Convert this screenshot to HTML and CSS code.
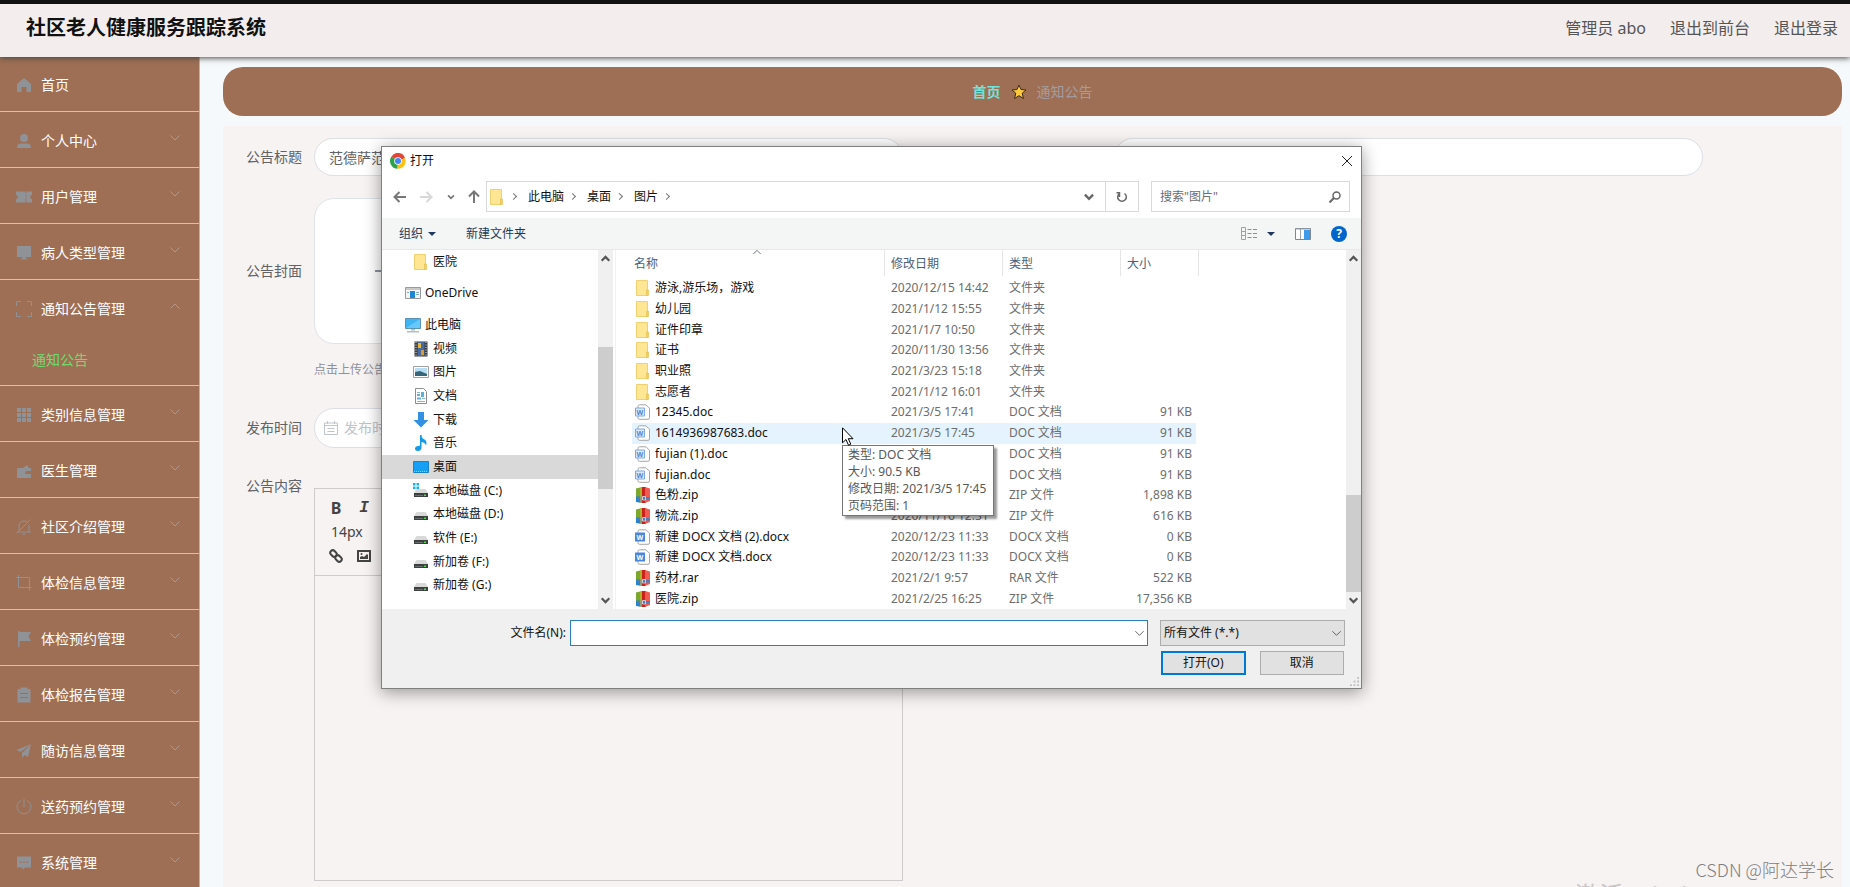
FILE: index.html
```
<!DOCTYPE html>
<html lang="zh-CN">
<head>
  <meta charset="UTF-8">
  <meta name="viewport" content="width=device-width, initial-scale=1.0">
  <title>社区老人健康服务跟踪系统</title>
  <link rel="stylesheet" href="styles.css">
</head>
<body>
  <!-- shared icons -->
  <svg class="sprite" aria-hidden="true">
    <symbol id="chevron" viewBox="0 0 12 12"><path d="M1.500 3.500l4.500 4.500l4.500-4.500" fill="none" stroke="currentColor"/></symbol>
    <symbol id="arrow-down" viewBox="0 0 12 12"><path d="M2.500 4l3.500 3.500l3.500-3.500" fill="none" stroke="currentColor" stroke-width="2"/></symbol>
    <symbol id="folder" viewBox="0 0 16 16"><path d="M1.500 .5h11v15h-11z" fill="#ffe694" stroke="#f0d070"/><path d="M11.500 10h2v5.500h-2z" fill="#f5cf5c" stroke="#e5be4f" stroke-width=".6"/></symbol>
    <symbol id="drive" viewBox="0 0 16 16"><path d="M3.500 6h9l2.500 4h-14z" fill="#d9d9d9"/><path d="M1 10h14v4h-14z" fill="#3b3f3f"/><path d="M2 12h8v1h-8z" fill="#6b7070"/><path d="M11 11.500h2v1.500h-2z" fill="#4be04b"/></symbol>
    <symbol id="doc" viewBox="0 0 16 16"><path d="M4.500 .8h6.500l3.500 3.500v9.500q0 1.500-1.500 1.500h-8.500q-1.500 0-1.500-1.500v-11.500q0-1.500 1.500-1.500z" fill="#fff" stroke="#a5a5a5"/><path d="M.5 4h9v8h-9z" fill="#dbe9fb" stroke="#7ea8de"/><text x="5" y="10.600" font-size="7" font-weight="bold" text-anchor="middle" fill="#4d86cf">W</text></symbol>
    <symbol id="docx" viewBox="0 0 16 16"><path d="M4.500 .8h6.500l3.500 3.500v9.500q0 1.500-1.500 1.500h-8.500q-1.500 0-1.500-1.500v-11.500q0-1.500 1.500-1.500z" fill="#fff" stroke="#a5a5a5"/><path d="M0 3.500h10v9h-10z" fill="#4a86e0"/><text x="5" y="10.600" font-size="7" font-weight="bold" text-anchor="middle" fill="#fff">W</text></symbol>
    <symbol id="archive" viewBox="0 0 16 16"><path d="M1 1.500l6-1.500v10h-6z" fill="#79a82c"/><path d="M7 0h4v16h-4z" fill="#c9221b"/><path d="M10 0l5 1.500v12.500l-5 2z" fill="#f15a50"/><path d="M1 9.500h6v6.500l-6-1z" fill="#2880d0"/><path d="M2 10h13v2.500h-13z" fill="#4b7ebb"/><path d="M7.500 9.500h3v3.500h-3z" fill="none" stroke="#c3cedb"/><path d="M5.500 0h1v16h-1z" fill="#e8b62e"/></symbol>
  </svg>

  <header class="header">
    <h1 class="title">社区老人健康服务跟踪系统</h1>
    <nav class="user-nav">
      <span>管理员 abo</span>
      <a href="#">退出到前台</a>
      <a href="#">退出登录</a>
    </nav>
  </header>

  <div class="layout">
    <aside class="sidebar">
      <ul class="menu">
        <li><a href="#"><svg class="menu-icon" viewBox="0 0 16 16"><path d="M8 1l7 6v8h-4.500v-5h-5v5h-4.500v-8z"/></svg>首页</a></li>
        <li><a href="#"><svg class="menu-icon" viewBox="0 0 16 16"><circle cx="8" cy="5" r="4"/><path d="M1 15v-1q0-3.500 4-3.500h6q4 0 4 3.500v1z"/></svg>个人中心<svg class="menu-arrow"><use href="#chevron"/></svg></a></li>
        <li><a href="#"><svg class="menu-icon" viewBox="0 0 16 16"><path d="M0 2.500h9.500v2h1v-2h5.500v3.500q-2 .3-2 2t2 2v3.500h-5.500v-2h-1v2h-9.500v-3.500q2-.3 2-2t-2-2zM9.500 6h1v1.500h-1zM9.500 9h1v1.500h-1z" fill-rule="evenodd"/></svg>用户管理<svg class="menu-arrow"><use href="#chevron"/></svg></a></li>
        <li><a href="#"><svg class="menu-icon" viewBox="0 0 16 16"><path d="M1 1h14v11h-14zM6.500 12h3v1.500h2v1h-7v-1h2z"/></svg>病人类型管理<svg class="menu-arrow"><use href="#chevron"/></svg></a></li>
        <li class="open">
          <a href="#"><svg class="menu-icon line" viewBox="0 0 16 16"><path d="M.5 5v-4.500h4.500M11 .5h4.500v4.500M15.500 11v4.500h-4.500M5 15.500h-4.500v-4.500"/></svg>通知公告管理<svg class="menu-arrow"><use href="#chevron"/></svg></a>
          <a href="#" class="submenu">通知公告</a>
        </li>
        <li><a href="#"><svg class="menu-icon" viewBox="0 0 16 16"><path d="M1 1h4v4h-4zM6 1h4v4h-4zM11 1h4v4h-4zM1 6h4v4h-4zM6 6h4v4h-4zM11 6h4v4h-4zM1 11h4v4h-4zM6 11h4v4h-4zM11 11h4v4h-4z"/></svg>类别信息管理<svg class="menu-arrow"><use href="#chevron"/></svg></a></li>
        <li><a href="#"><svg class="menu-icon" viewBox="0 0 16 16"><path d="M1 5h6l4-3l2 3h2v3h-4q-2 0-2 1.500t2 1.500h4v4h-14z"/></svg>医生管理<svg class="menu-arrow"><use href="#chevron"/></svg></a></li>
        <li><a href="#"><svg class="menu-icon line" viewBox="0 0 16 16"><path d="M14.500 .5l-14 14M1 13h14M3 11.500v-4.500q0-5 5-5q2 0 3.500 1M13 5.500v7.500M6.500 15h3"/></svg>社区介绍管理<svg class="menu-arrow"><use href="#chevron"/></svg></a></li>
        <li><a href="#"><svg class="menu-icon line" viewBox="0 0 16 16"><path d="M0 2.500h13.500v13M2.500 0v12.500h13"/></svg>体检信息管理<svg class="menu-arrow"><use href="#chevron"/></svg></a></li>
        <li><a href="#"><svg class="menu-icon" viewBox="0 0 16 16"><path d="M2 0h1.500v1h11.500l-2.500 4.500l2.500 4.500h-11.500v6h-1.500z"/></svg>体检预约管理<svg class="menu-arrow"><use href="#chevron"/></svg></a></li>
        <li><a href="#"><svg class="menu-icon" viewBox="0 0 16 16"><path d="M1.500 2h3v-1.500h7v1.500h3v13.500h-13zM4 6v1h8v-1zM4 10v1h8v-1z" fill-rule="evenodd"/></svg>体检报告管理<svg class="menu-arrow"><use href="#chevron"/></svg></a></li>
        <li><a href="#"><svg class="menu-icon" viewBox="0 0 16 16"><path d="M15 1l-14.500 6l4 2zM15 1l-9 9v5l2.500-3l3.500 2z"/></svg>随访信息管理<svg class="menu-arrow"><use href="#chevron"/></svg></a></li>
        <li><a href="#"><svg class="menu-icon line" viewBox="0 0 16 16"><path d="M8 0v8M5 1.500a7 7 0 1 0 6 0"/></svg>送药预约管理<svg class="menu-arrow"><use href="#chevron"/></svg></a></li>
        <li><a href="#"><svg class="menu-icon" viewBox="0 0 16 16"><path d="M1 1.500h14v11h-6l-2.500 2.500v-2.500h-5.500zM4 6.500v1.500h1.500v-1.500zM7.300 6.500v1.500h1.500v-1.500zM10.600 6.500v1.500h1.500v-1.500z" fill-rule="evenodd"/></svg>系统管理<svg class="menu-arrow"><use href="#chevron"/></svg></a></li>
      </ul>
    </aside>

    <main class="main">
      <nav class="breadcrumb">
        <a href="#">首页</a>
        <svg class="star" viewBox="0 0 16 16"><path d="M8 1l2 4.500l5 .5l-3.800 3.200l1.300 5.300l-4.500-2.800l-4.500 2.800l1.300-5.300l-3.800-3.200l5-.5z" fill="#ffc93c" stroke="#3b2a18" stroke-linejoin="round"/></svg>
        <span>通知公告</span>
      </nav>

      <form class="form">
        <div class="form-row">
          <div class="form-item">
            <label for="notice-title">公告标题</label>
            <input class="text-input" type="text" id="notice-title" value="范德萨范德萨">
          </div>
          <div class="form-item no-label">
            <input class="text-input" type="text" aria-label="公告类型">
          </div>
        </div>
        <div class="form-item upload-item">
          <label for="cover">公告封面</label>
          <button type="button" class="upload" id="cover" aria-label="上传公告封面">
            <svg width="28" height="28" viewBox="0 0 28 28"><path d="M1 14h26M14 1v26" stroke="#8c939d" stroke-width="2"/></svg>
          </button>
        </div>
        <p class="tip">点击上传公告封面</p>
        <div class="form-item">
          <label for="publish-date">发布时间</label>
          <div class="date-box">
            <svg width="14" height="14" viewBox="0 0 14 14"><path d="M.5 2h13v11.500h-13zM.5 4.500h13M3.500 7.500h7M3.500 10.500h7M3.500 0v3M10.500 0v3" fill="none" stroke="#c0c4cc"/></svg>
            <input type="text" id="publish-date" placeholder="发布时间">
          </div>
        </div>
        <div class="form-row content-row">
          <div class="form-item content-item">
            <label for="content">公告内容</label>
            <div class="editor">
              <div class="editor-bar">
                <button type="button" class="bold">B</button>
                <button type="button" class="italic">I</button>
                <span class="font-size">14px</span>
                <button type="button" aria-label="链接"><svg width="14" height="14" viewBox="0 0 14 14"><g fill="none" stroke="#444" stroke-width="2"><rect x="-3.500" y="-2.500" width="7" height="5" rx="2.500" transform="translate(4.500 4.500) rotate(45)"/><rect x="-3.500" y="-2.500" width="7" height="5" rx="2.500" transform="translate(9.500 9.500) rotate(45)"/></g></svg></button>
                <button type="button" aria-label="图片"><svg width="14" height="12" viewBox="0 0 14 12"><path d="M1 1h12v10h-12z" fill="none" stroke="#444" stroke-width="2"/><circle cx="4.500" cy="4" r="1" fill="#444"/><path d="M3 9v-2l2-1l2 1l3-3l1 1v4z" fill="#444"/></svg></button>
              </div>
              <textarea id="content"></textarea>
            </div>
          </div>
        </div>
      </form>
    </main>
  </div>

  <section class="dialog" role="dialog" aria-label="打开">
    <div class="dialog-title">
      <svg width="16" height="16" viewBox="0 0 16 16"><path d="M8 8L1.500 3.500A7.500 7.500 0 0 1 15 5z" fill="#e2453a"/><path d="M8 8L1.500 3.500A7.700 7.700 0 0 0 7.500 15.700z" fill="#2ba24c"/><path d="M8 8L15 5A7.600 7.600 0 0 1 7.500 15.700z" fill="#fbc116"/><circle cx="8" cy="8" r="3.800" fill="#fff"/><circle cx="8" cy="8" r="3" fill="#4285f4"/></svg>
      <span>打开</span>
      <button type="button" class="close" aria-label="关闭"><svg width="12" height="12" viewBox="0 0 12 12"><path d="M1 1l10 10M11 1l-10 10" stroke="#222"/></svg></button>
    </div>

    <div class="nav-row">
      <div class="nav-buttons">
        <button type="button" aria-label="后退"><svg width="14" height="12" viewBox="0 0 14 12"><path d="M13 6h-11M6.500 1l-5 5l5 5" fill="none" stroke="#777" stroke-width="2"/></svg></button>
        <button type="button" aria-label="前进"><svg width="14" height="12" viewBox="0 0 14 12"><path d="M1 6h11M7.500 1l5 5l-5 5" fill="none" stroke="#d8d8d8" stroke-width="2"/></svg></button>
        <button type="button" aria-label="最近位置"><svg width="10" height="10" viewBox="0 0 12 12"><use href="#arrow-down"/></svg></button>
        <button type="button" aria-label="上移"><svg width="12" height="13" viewBox="0 0 12 13"><path d="M6 13v-11M1 6.500l5-5l5 5" fill="none" stroke="#777" stroke-width="2"/></svg></button>
      </div>
      <div class="address">
        <svg width="16" height="16"><use href="#folder"/></svg>
        <i class="sep"></i><a href="#">此电脑</a><i class="sep"></i><a href="#">桌面</a><i class="sep"></i><a href="#">图片</a><i class="sep"></i>
        <button type="button" class="history" aria-label="历史"><svg width="14" height="14" viewBox="0 0 12 12"><use href="#arrow-down"/></svg></button>
        <button type="button" class="refresh" aria-label="刷新"><svg width="12" height="12" viewBox="0 0 12 12"><path d="M8.500 2.500a4.300 4.300 0 1 1-5 0M3.500 6v-4.200h-3" fill="none" stroke="#666" stroke-width="1.500"/></svg></button>
      </div>
      <div class="search">
        <input type="text" placeholder='搜索"图片"' aria-label="搜索">
        <svg width="12" height="12" viewBox="0 0 12 12"><circle cx="7.500" cy="4.500" r="3.500" fill="none" stroke="#666" stroke-width="1.500"/><path d="M5 7l-4.500 4.500" stroke="#666" stroke-width="2"/></svg>
      </div>
    </div>

    <div class="tool-row">
      <button type="button" class="organize">组织<i class="triangle"></i></button>
      <button type="button">新建文件夹</button>
      <div class="view-tools">
        <button type="button" aria-label="更改视图"><svg width="17" height="13" viewBox="0 0 17 13"><path d="M.5 .5h4v12h-4zM.5 4.500h4M.5 8.500h4" fill="none" stroke="#a0a0a0"/><path d="M6.500 2.500h4M12 2.500h4M6.500 6.500h4M12 6.500h4M6.500 10.500h4M12 10.500h4" stroke="#8f8f8f"/></svg><i class="triangle"></i></button>
        <button type="button" aria-label="预览窗格"><svg width="16" height="12" viewBox="0 0 16 12"><path d="M.5 .5h15v11h-15z" fill="#fff" stroke="#7e8790"/><path d="M.5 1h15M5.500 1v10" stroke="#9aa2aa"/><path d="M9 2h6v9h-6z" fill="#3d9be9"/></svg></button>
        <button type="button" class="help">?</button>
      </div>
    </div>

    <div class="dialog-body">
      <ul class="tree">
        <li class="child"><svg class="file-icon"><use href="#folder"/></svg>医院</li>
        <li class="root"><svg class="file-icon" viewBox="0 0 16 16"><path d="M.5 2.500h15v11h-15z" fill="#f4f4f4" stroke="#999"/><path d="M1 3h14v2h-14z" fill="#c9c9c9"/><path d="M5 6h5v7h-5z" fill="#1c86d8"/><path d="M11 7.500h3M11 9.500h3M2 7.500h2" stroke="#8aa7be"/></svg>OneDrive</li>
        <li class="root"><svg class="file-icon" viewBox="0 0 16 16"><path d="M.5 1.500h15v10h-15z" fill="#3fb4f2" stroke="#5b93b5"/><path d="M1 11l14-9v9z" fill="#66c8fa"/><path d="M6 12h4v1.500h-4zM2 14h12v1.500h-12z" fill="#b2bfca"/></svg>此电脑</li>
        <li class="child"><svg class="file-icon" viewBox="0 0 16 16"><path d="M1.500 .5h13v15h-13z" fill="#37393d"/><path d="M4.500 1h7v14h-7z" fill="#486a9f"/><path d="M5 2h3v5h-3z" fill="#e7b83c"/><path d="M8 9h3v5h-3z" fill="#d99c35"/><path d="M3 1v14M13 1v14" stroke="#eee" stroke-dasharray="1 1.500"/></svg>视频</li>
        <li class="child"><svg class="file-icon" viewBox="0 0 16 16"><path d="M.5 2.500h15v11h-15z" fill="#fff" stroke="#a0a0a0"/><path d="M2 4h12v8h-12z" fill="#b7def5"/><path d="M2 8l5-1l7 3v2h-12z" fill="#37667a"/></svg>图片</li>
        <li class="child"><svg class="file-icon" viewBox="0 0 16 16"><path d="M2.500 .5h8l3 3v12h-11z" fill="#fff" stroke="#8d8d8d"/><path d="M4 6h3v2h-3zM8 4h3v5h-3zM4 9.500h4v2h-4z" fill="#5eb0d8"/><path d="M4 4.500h3M9 10.500h3M4 13.500h8" stroke="#8bb7cb"/></svg>文档</li>
        <li class="child"><svg class="file-icon" viewBox="0 0 16 16"><path d="M5 0h6v8h4.500l-7.500 7.500l-7.500-7.500h4.500z" fill="#3490e3"/></svg>下载</li>
        <li class="child"><svg class="file-icon" viewBox="0 0 16 16"><path d="M7 0h1.500q0 3 3 4.500t1.500 6q-.5-3-4.500-3.500v6q-.5 3-3.500 3t-3-2.500t5-3z" fill="#149be8"/></svg>音乐</li>
        <li class="child selected"><svg class="file-icon" viewBox="0 0 16 16"><path d="M.5 2.500h15v11h-15z" fill="#169ff5" stroke="#1a82c6"/><path d="M1 12.500h14" stroke="#8dd0f8" stroke-dasharray="1 1"/></svg>桌面</li>
        <li class="child"><svg class="file-icon" viewBox="0 0 16 16"><use href="#drive" width="16" height="16"/><path d="M0 0h2.500v2.500h-2.500zM3.500 0h2.500v2.500h-2.500zM0 3.500h2.500v2.500h-2.500zM3.500 3.500h2.500v2.500h-2.500z" fill="#18b2ea"/></svg>本地磁盘 (C:)</li>
        <li class="child"><svg class="file-icon"><use href="#drive"/></svg>本地磁盘 (D:)</li>
        <li class="child"><svg class="file-icon"><use href="#drive"/></svg>软件 (E:)</li>
        <li class="child"><svg class="file-icon"><use href="#drive"/></svg>新加卷 (F:)</li>
        <li class="child"><svg class="file-icon"><use href="#drive"/></svg>新加卷 (G:)</li>
      </ul>
      <div class="scrollbar">
        <svg class="flip" viewBox="0 0 12 12"><use href="#arrow-down"/></svg>
        <div class="track tree-track"><div class="thumb"></div></div>
        <svg viewBox="0 0 12 12"><use href="#arrow-down"/></svg>
      </div>

      <table class="files">
        <thead>
          <tr><th>名称<svg class="sort" viewBox="0 0 12 12"><use href="#chevron"/></svg></th><th>修改日期</th><th>类型</th><th>大小</th></tr>
        </thead>
        <tbody>
          <tr><td><svg class="file-icon"><use href="#folder"/></svg>游泳,游乐场，游戏</td><td>2020/12/15 14:42</td><td>文件夹</td><td></td></tr>
          <tr><td><svg class="file-icon"><use href="#folder"/></svg>幼儿园</td><td>2021/1/12 15:55</td><td>文件夹</td><td></td></tr>
          <tr><td><svg class="file-icon"><use href="#folder"/></svg>证件印章</td><td>2021/1/7 10:50</td><td>文件夹</td><td></td></tr>
          <tr><td><svg class="file-icon"><use href="#folder"/></svg>证书</td><td>2020/11/30 13:56</td><td>文件夹</td><td></td></tr>
          <tr><td><svg class="file-icon"><use href="#folder"/></svg>职业照</td><td>2021/3/23 15:18</td><td>文件夹</td><td></td></tr>
          <tr><td><svg class="file-icon"><use href="#folder"/></svg>志愿者</td><td>2021/1/12 16:01</td><td>文件夹</td><td></td></tr>
          <tr><td><svg class="file-icon"><use href="#doc"/></svg>12345.doc</td><td>2021/3/5 17:41</td><td>DOC 文档</td><td>91 KB</td></tr>
          <tr class="hover"><td><svg class="file-icon"><use href="#doc"/></svg>1614936987683.doc</td><td>2021/3/5 17:45</td><td>DOC 文档</td><td>91 KB</td></tr>
          <tr><td><svg class="file-icon"><use href="#doc"/></svg>fujian (1).doc</td><td></td><td>DOC 文档</td><td>91 KB</td></tr>
          <tr><td><svg class="file-icon"><use href="#doc"/></svg>fujian.doc</td><td></td><td>DOC 文档</td><td>91 KB</td></tr>
          <tr><td><svg class="file-icon"><use href="#archive"/></svg>色粉.zip</td><td></td><td>ZIP 文件</td><td>1,898 KB</td></tr>
          <tr><td><svg class="file-icon"><use href="#archive"/></svg>物流.zip</td><td>2020/11/16 12:31</td><td>ZIP 文件</td><td>616 KB</td></tr>
          <tr><td><svg class="file-icon"><use href="#docx"/></svg>新建 DOCX 文档 (2).docx</td><td>2020/12/23 11:33</td><td>DOCX 文档</td><td>0 KB</td></tr>
          <tr><td><svg class="file-icon"><use href="#docx"/></svg>新建 DOCX 文档.docx</td><td>2020/12/23 11:33</td><td>DOCX 文档</td><td>0 KB</td></tr>
          <tr><td><svg class="file-icon"><use href="#archive"/></svg>药材.rar</td><td>2021/2/1 9:57</td><td>RAR 文件</td><td>522 KB</td></tr>
          <tr><td><svg class="file-icon"><use href="#archive"/></svg>医院.zip</td><td>2021/2/25 16:25</td><td>ZIP 文件</td><td>17,356 KB</td></tr>
        </tbody>
      </table>
      <div class="scrollbar">
        <svg class="flip" viewBox="0 0 12 12"><use href="#arrow-down"/></svg>
        <div class="track file-track"><div class="thumb"></div></div>
        <svg viewBox="0 0 12 12"><use href="#arrow-down"/></svg>
      </div>
    </div>

    <div class="dialog-footer">
      <label for="filename">文件名(N):</label>
      <div class="combo">
        <input type="text" id="filename">
        <svg class="combo-arrow" viewBox="0 0 12 12"><use href="#chevron"/></svg>
      </div>
      <div class="filter">
        <select aria-label="文件类型"><option>所有文件 (*.*)</option></select>
        <svg class="combo-arrow" viewBox="0 0 12 12"><use href="#chevron"/></svg>
      </div>
      <div class="actions">
        <button type="button" class="primary">打开(O)</button>
        <button type="button">取消</button>
      </div>
    </div>
    <svg class="grip" viewBox="0 0 10 10"><path d="M8 0h2v2h-2zM4 4h2v2h-2zM8 4h2v2h-2zM0 8h2v2h-2zM4 8h2v2h-2zM8 8h2v2h-2z" fill="#bfbfbf"/></svg>

    <div class="tooltip" role="tooltip">
      <div>类型: DOC 文档</div>
      <div>大小: 90.5 KB</div>
      <div>修改日期: 2021/3/5 17:45</div>
      <div>页码范围: 1</div>
    </div>
    <svg class="cursor" viewBox="0 0 12 19"><path d="M.5 .8v15l3.500-3.300l2.500 5.700l2.300-1l-2.500-5.500h4.700z" fill="#fff" stroke="#000"/></svg>
  </section>

  <div class="activate">激活 Windows</div>
  <div class="watermark">CSDN @阿达学长</div>
</body>
</html>
```
FILE: styles.css
```
* {
  box-sizing: border-box;
}
body {
  margin: 0;
  height: 100vh;
  overflow: hidden;
  display: flex;
  flex-direction: column;
  position: relative;
  border-top: 4px solid #111;
  background-color: #f6f9fc;
  font-family: "Noto Sans", "Noto Sans CJK SC", sans-serif;
  font-size: 14px;
  line-height: 20px;
  color: #606266;
}
a {
  color: inherit;
  text-decoration: none;
}
ul {
  list-style: none;
  margin: 0;
  padding: 0;
}
button, input, select, textarea {
  font: inherit;
  color: inherit;
}
button {
  padding: 0;
  border: 0;
  background: none;
}
input {
  outline: none;
  min-width: 0;
}
svg {
  flex: none;
}
.sprite {
  position: absolute;
  width: 0;
  height: 0;
}

/* header */
.header {
  display: flex;
  flex: none;
  justify-content: space-between;
  align-items: center;
  height: 53px;
  padding: 0 12px 5px 26px;
  background-color: #f3eeed;
  box-shadow: 0 1px 6px #444;
  z-index: 1;
}
.title {
  margin: 0;
  font-size: 20px;
  font-weight: bold;
  line-height: 28px;
  color: #111;
}
.user-nav {
  display: flex;
  gap: 24px;
  font-size: 16px;
  color: #555;
}

/* sidebar */
.layout {
  display: flex;
  flex: 1;
  min-height: 0;
}
.sidebar {
  width: 200px;
  flex: none;
  margin-top: -1px;
  background-color: #9e6f54;
  border-right: 1px solid #c9afa1;
}
.menu li {
  border-bottom: 1px solid #d3c0b6;
}
.menu a {
  display: flex;
  align-items: center;
  height: 55px;
  padding: 2px 18px 0 16px;
  color: #fff;
}
.menu-icon {
  width: 16px;
  height: 16px;
  margin-right: 9px;
  fill: #8f9297;
}
.menu-icon.line {
  fill: none;
  stroke: #8f9297;
}
.menu-arrow {
  width: 12px;
  height: 12px;
  margin: 0 0 6px auto;
  color: #b3978a;
}
.open .menu-arrow {
  transform: rotate(180deg);
}
.menu .submenu {
  height: 50px;
  padding: 0 0 0 32px;
  color: #6fdc6f;
}

/* main */
.main {
  display: flex;
  flex-direction: column;
  flex: 1;
  gap: 10px;
  padding: 10px 8px 0 23px;
}
.breadcrumb {
  display: flex;
  flex: none;
  justify-content: center;
  align-items: center;
  gap: 10px;
  height: 49px;
  border-radius: 20px;
  background-color: #9e6f54;
  color: #a39da0;
}
.breadcrumb a {
  font-weight: bold;
  color: #6ee5dc;
}
.star {
  width: 16px;
  height: 16px;
}
.form {
  flex: 1;
  padding: 12px 8px 0 11px;
  background-color: #f7f3f2;
}
.form-row {
  display: grid;
  grid-template-columns: 1fr 1fr;
}
.form-row .form-item {
  padding-right: 131px;
}
.form-item {
  display: flex;
  align-items: center;
}
.form-item label {
  width: 80px;
  flex: none;
  padding-right: 12px;
  text-align: right;
}
.form-row .no-label {
  padding-left: 80px;
}
.text-input {
  flex: 1;
  height: 38px;
  padding: 0 14px;
  border: 1px solid #dcdfe6;
  border-radius: 20px;
  background-color: #fff;
}
.upload-item {
  margin-top: 22px;
}
.upload {
  display: flex;
  align-items: center;
  justify-content: center;
  width: 148px;
  height: 146px;
  border: 1px solid #dfe3ea;
  border-radius: 20px;
  background-color: #fff;
}
.tip {
  margin: 16px 0 28px 80px;
  font-size: 12px;
  color: #8c919c;
}
.date-box {
  display: flex;
  align-items: center;
  gap: 6px;
  width: 220px;
  height: 40px;
  padding: 0 9px;
  border: 1px solid #dcdfe6;
  border-radius: 20px;
  background-color: #fff;
}
.date-box input {
  width: 150px;
  border: 0;
  padding: 0;
}
.date-box input::placeholder {
  color: #c0c4cc;
}
.content-row {
  margin-top: 28px;
}
.content-item {
  align-items: flex-start;
}
.editor {
  flex: 1;
  margin-top: 12px;
  border: 1px solid #ccc;
}
.editor-bar {
  display: grid;
  grid-template-columns: 28px 28px;
  grid-auto-rows: 24px;
  align-items: center;
  justify-items: center;
  padding: 7px;
  border-bottom: 1px solid #ccc;
  color: #444;
}
.editor-bar button {
  display: flex;
}
.bold, .italic {
  font-size: 16px;
  font-weight: bold;
}
.editor-bar .italic {
  font-family: "Liberation Mono", monospace;
  font-style: italic;
}
.font-size {
  grid-column: 1 / 3;
  justify-self: start;
  margin-left: 9px;
}
.editor textarea {
  display: block;
  width: 100%;
  height: 304px;
  border: 0;
  outline: none;
  resize: none;
  background: none;
}

/* file dialog */
.dialog {
  position: absolute;
  left: 381px;
  top: 142px;
  z-index: 2;
  width: 981px;
  border: 1px solid #808080;
  background-color: #fff;
  box-shadow: 0 3px 16px rgba(0, 0, 0, 0.4);
  font-size: 12px;
  line-height: 16px;
  color: #111;
}
.dialog button {
  display: flex;
  align-items: center;
}
.dialog-title {
  display: flex;
  align-items: center;
  gap: 4px;
  height: 27px;
  padding: 0 8px;
}
.close {
  margin-left: auto;
}
.nav-row {
  display: flex;
  gap: 12px;
  padding: 7px 11px 6px;
}
.nav-buttons {
  display: flex;
  align-items: center;
  justify-content: space-between;
  width: 87px;
  margin-right: -6px;
  color: #777;
}
.address {
  display: flex;
  align-items: center;
  flex: 1;
  height: 31px;
  padding-left: 2px;
  border: 1px solid #d9d9d9;
}
.sep {
  width: 5px;
  height: 5px;
  margin: 0 12px 0 6px;
  border: solid #777;
  border-width: 1px 1px 0 0;
  transform: rotate(45deg);
}
.history {
  margin: 0 9px 0 auto;
  color: #666;
}
.dialog .refresh {
  width: 33px;
  height: 29px;
  justify-content: center;
  border-left: 1px solid #d9d9d9;
}
.search {
  display: flex;
  align-items: center;
  width: 199px;
  padding: 0 8px;
  border: 1px solid #d9d9d9;
}
.search input {
  flex: 1;
  border: 0;
  padding: 0;
}
.search input::placeholder {
  color: #6d6d6d;
}
.tool-row {
  display: flex;
  align-items: center;
  gap: 30px;
  height: 32px;
  padding: 0 14px 0 17px;
  border-bottom: 1px solid #e6e8e9;
  background-color: #f4f6f6;
  color: #1e395b;
}
.triangle {
  margin-left: 5px;
  border: solid transparent;
  border-width: 4px 4px 0;
  border-top-color: #1e395b;
}
.view-tools {
  display: flex;
  align-items: center;
  gap: 20px;
  margin-left: auto;
}
.view-tools .triangle {
  margin-left: 9px;
}
.dialog .help {
  justify-content: center;
  width: 16px;
  height: 16px;
  border-radius: 50%;
  background-color: #0066cc;
  color: #fff;
  font-weight: bold;
}
.dialog-body {
  display: flex;
  height: 359px;
}
.tree {
  display: flex;
  flex-direction: column;
  width: 216px;
  padding-bottom: 12px;
}
.tree li {
  display: flex;
  align-items: center;
  flex: 1;
}
.tree .root {
  margin-top: 8px;
  padding-left: 23px;
}
.tree .child {
  padding-left: 31px;
}
.tree .selected {
  background-color: #d9d9d9;
}
.file-icon {
  width: 16px;
  height: 16px;
  margin-right: 4px;
}
.scrollbar {
  display: flex;
  flex-direction: column;
  align-items: center;
  width: 15px;
  padding: 2px 0;
  background-color: #f0f0f0;
  color: #555;
}
.scrollbar svg {
  width: 13px;
  height: 13px;
}
.flip {
  transform: rotate(180deg);
}
.track {
  display: flex;
  flex: 1;
  align-self: stretch;
}
.thumb {
  width: 100%;
  background-color: #cdcdcd;
}
.tree-track {
  align-items: flex-start;
  padding-top: 82px;
}
.tree-track .thumb {
  height: 142px;
}
.file-track {
  align-items: flex-end;
  padding-bottom: 2px;
}
.file-track .thumb {
  height: 97px;
}
.files {
  display: flex;
  flex-direction: column;
  flex: 1;
  margin-left: 2px;
  padding-left: 16px;
  border-left: 1px solid #f2f2f2;
}
.files tr {
  display: grid;
  grid-template-columns: 253px 118px 118px 78px;
  align-items: center;
}
.files tbody {
  display: grid;
  flex: 1;
  grid-template-rows: repeat(16, 1fr);
}
.files th {
  height: 26px;
  padding: 6px 6px 0;
  border-right: 1px solid #e5e5e5;
  font-weight: normal;
  text-align: left;
  color: #4c607a;
}
.files thead {
  height: 28px;
}
.files th:first-child {
  position: relative;
  padding-left: 2px;
}
.sort {
  position: absolute;
  left: 120px;
  top: -3px;
  width: 10px;
  height: 10px;
  transform: rotate(180deg);
}
.files td {
  padding: 0 6px;
  white-space: nowrap;
  color: #6d6d6d;
}
.files td:first-child {
  display: flex;
  align-items: center;
  padding-left: 3px;
  color: #111;
}
.files td:last-child {
  padding-right: 7px;
  text-align: right;
}
.files .hover {
  width: 564px;
  grid-template-columns: 253px 118px 118px 75px;
  align-content: center;
  background-color: #e5f3ff;
}
.files .hover td:last-child {
  padding-right: 4px;
}
.dialog-footer {
  display: grid;
  grid-template-columns: 184px 1fr 185px;
  column-gap: 12px;
  row-gap: 5px;
  padding: 11px 16px 13px 0;
  background-color: #f0f0f0;
}
.dialog-footer label {
  align-self: center;
  text-align: right;
}
.combo {
  position: relative;
  margin-left: -8px;
}
.combo input {
  display: block;
  width: 100%;
  height: 26px;
  padding: 0 24px 0 4px;
  border: 1px solid #2b80b8;
  background-color: #fff;
}
.filter {
  position: relative;
}
.filter select {
  display: block;
  width: 100%;
  height: 26px;
  padding: 0 3px;
  appearance: none;
  border: 1px solid #adadad;
  border-radius: 0;
  background-color: #e1e1e1;
}
.combo-arrow {
  position: absolute;
  right: 3px;
  top: 8px;
  width: 11px;
  height: 11px;
  color: #555;
}
.actions {
  display: grid;
  grid-template-columns: 1fr 1fr;
  grid-column: 3;
  gap: 14px;
  padding: 0 1px;
}
.actions button {
  justify-content: center;
  height: 24px;
  border: 1px solid #adadad;
  background-color: #e1e1e1;
}
.actions .primary {
  border: 2px solid #0078d7;
}
.grip {
  position: absolute;
  right: 2px;
  bottom: 2px;
  width: 9px;
  height: 9px;
}
.tooltip {
  position: absolute;
  left: 460px;
  top: 298px;
  padding: 0 7px 1px 5px;
  border: 1px solid #767676;
  background-color: #fff;
  box-shadow: 3px 3px 2px rgba(0, 0, 0, 0.4);
  line-height: 17px;
  white-space: nowrap;
  color: #575757;
}
.cursor {
  position: absolute;
  left: 460px;
  top: 280px;
  width: 12px;
  height: 19px;
}

/* watermarks */
.activate {
  position: absolute;
  right: 118px;
  bottom: -20px;
  font-size: 24px;
  line-height: 24px;
  color: #c9c5c5;
}
.watermark {
  position: absolute;
  right: 16px;
  bottom: 7px;
  font-family: "Noto Sans CJK SC", sans-serif;
  font-size: 18px;
  font-weight: 300;
  line-height: 22px;
  color: #808080;
}
```
